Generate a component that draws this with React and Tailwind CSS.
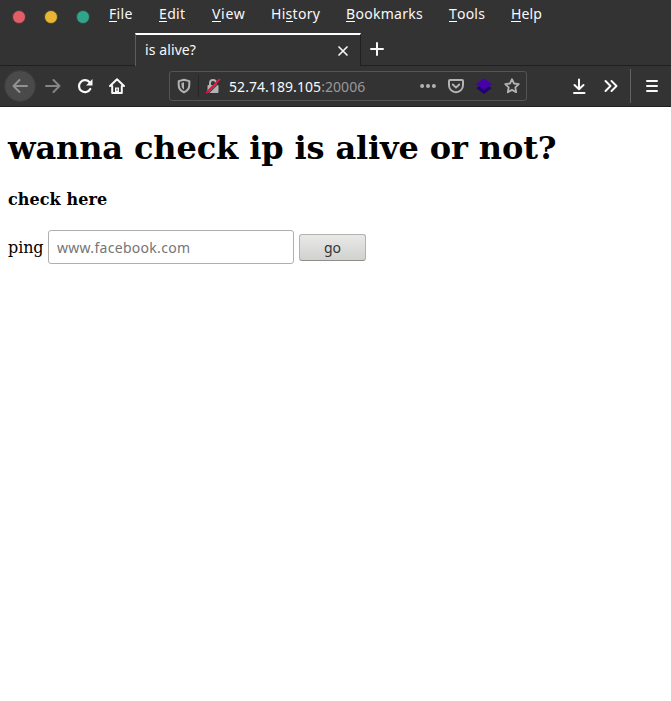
import React from 'react';

const menuItems = [
  { label: 'File', key: 0, box: 'w-[50px]', text: 'tracking-[0.3px]' },
  { label: 'Edit', key: 0, box: 'w-[53px]', text: 'tracking-[0.35px]' },
  { label: 'View', key: 0, box: 'w-[59px]', text: 'tracking-[0.7px]' },
  { label: 'History', key: 2, box: 'w-[75px]', text: 'tracking-[0.3px]' },
  { label: 'Bookmarks', key: 0, box: 'w-[103px]', text: 'tracking-[0.3px]' },
  { label: 'Tools', key: 0, box: 'w-[62px]', text: 'tracking-[0.2px]' },
  { label: 'Help', key: 0, box: 'w-[40px]', text: 'tracking-[0.1px]' },
];

function Icon({ children, className = '' }) {
  return (
    <svg viewBox="0 0 16 16" className={`block size-4 shrink-0 ${className}`} fill="none" stroke="currentColor" strokeWidth="2" strokeLinecap="round" strokeLinejoin="round">
      {children}
    </svg>
  );
}

function MenuBar() {
  return (
    <div className="flex h-[33px] pl-[12px]">
      <div className="flex h-[34px] w-[97px] shrink-0 items-center gap-[18px]">
        <span className="size-[14px] shrink-0 rounded-full border border-[#48383a] bg-[#e35d66]" />
        <span className="size-[14px] shrink-0 rounded-full border border-[#484233] bg-[#e9b633]" />
        <span className="size-[14px] shrink-0 rounded-full border border-[#33433f] bg-[#2fa58c]" />
      </div>
      {menuItems.map(({ label, key, box, text }) => (
        <div key={label} className={`shrink-0 pt-[4px] text-[14px] leading-[20px] ${box} ${text}`}>
          {label.slice(0, key)}
          <span className="inline-block h-[18px] border-b border-white leading-[20px]">{label[key]}</span>
          {label.slice(key + 1)}
        </div>
      ))}
    </div>
  );
}

function TabStrip() {
  return (
    <div className="flex h-[33px]">
      <div className="w-[135px] border-b border-[#202020]" />
      <div className="flex w-[226px] items-center border-l border-l-[#5d5d5d] border-r border-r-[#202020] border-t-2 border-t-white pl-[9px] pr-[11px]">
        <span className="grow pb-[2px] text-[14px] leading-[20px] tracking-[0.1px]">is alive?</span>
        <svg viewBox="0 0 12 12" className="size-3" stroke="#f4f4f4" strokeWidth="1.7" strokeLinecap="round">
          <path d="M2 2l8 8M10 2l-8 8" />
        </svg>
      </div>
      <div className="grow border-b border-[#202020] pl-[8px] pt-[8px]">
        <Icon><path d="M8 2v12M2 8h12" /></Icon>
      </div>
    </div>
  );
}

function AddressBar() {
  return (
    <div className="flex h-[30px] w-[358px] shrink-0 items-center rounded-[3px] border border-[#545454] pl-[6px]">
      <Icon className="text-[#b3b3b3]">
        <path d="M8 1.8L2.7 3.1V7c0 3.3 1.8 5.8 5.3 7.2 3.500-1.4 5.300-3.9 5.300-7.2V3.100L8 1.8z" />
        <path d="M8 4.3v7.4c-1.7-1-2.500-2.6-2.500-4.7V5L8 4.3z" fill="currentColor" stroke="none" />
      </Icon>
      <span className="ml-[6px] h-[22px] w-px bg-[#272727]" />
      <Icon className="ml-[6px] text-[#b3b3b3]">
        <path d="M5 8V5a3 3 0 0 1 6 0v3" strokeLinecap="butt" />
        <rect x="2.5" y="7" width="11" height="8" rx="1" fill="currentColor" stroke="none" />
        <path d="M2.800 15.800L15.8 2.800" stroke="#333333" strokeWidth="1.2" strokeLinecap="butt" />
        <path d="M1.8 14.5L14.5 1.5" stroke="#f20b3d" strokeWidth="2" />
      </Icon>
      <span className="ml-[8px] w-[191px] whitespace-nowrap pt-[2px] text-[14px] leading-[20px] tracking-[0.06px]">
        52.74.189.105<span className="text-[#999999]">:20006</span>
      </span>
      <div className="flex gap-3 text-[#b3b3b3]">
        <Icon>
          <g fill="currentColor" stroke="none"><circle cx="2.1" cy="8" r="2" /><circle cx="8" cy="8" r="2" /><circle cx="13.9" cy="8" r="2" /></g>
        </Icon>
        <Icon>
          <path d="M2 2h12a1 1 0 0 1 1 1v4.2a7 7 0 0 1-14 0V3a1 1 0 0 1 1-1z" />
          <path d="M4.8 6.5L8 9.6l3.2-3.1" />
        </Icon>
        <Icon>
          <path d="M8 5.5l7.800 4.500L8 16 .2 10z" fill="#20006f" stroke="none" />
          <path d="M8 .2l8 5.8-8 5.900L0 6z" fill="#4601aa" stroke="none" />
        </Icon>
        <Icon>
          <path d="M8 1.2l2 4.3 4.8.6-3.5 3.3.9 4.8L8 11.9l-4.2 2.3.9-4.8L1.2 6.1 6 5.5z" strokeWidth="1.8" />
        </Icon>
      </div>
    </div>
  );
}

function Toolbar() {
  return (
    <div className="flex h-[41px] items-center border-b border-[#202020]">
      <div className="ml-[4px] flex size-8 shrink-0 items-center justify-center rounded-full border border-[#3b3b3b] bg-[#4a4a4a] text-[#929292]">
        <Icon><path d="M15 8H1.5M7.5 2L1.5 8l6 6" /></Icon>
      </div>
      <Icon className="ml-[9px] text-[#858585]"><path d="M1 8h13.5M8.500 2l6 6-6 6" /></Icon>
      <Icon className="ml-[16px]">
        <path d="M13.3 11a6 6 0 1 1-.5-6.500" strokeWidth="2.2" />
        <path d="M15.5 1v6.5H9z" fill="currentColor" stroke="none" />
      </Icon>
      <Icon className="ml-[16px]">
        <path d="M1 8l7-6.800L15 8M3.200 8v7h9.600V8" />
        <path d="M6 15v-5.500h4V15z" fill="currentColor" stroke="none" />
        <path d="M8 11v1.500" stroke="#333333" strokeWidth="1" />
      </Icon>
      <div className="w-[44px] shrink-0" />
      <AddressBar />
      <Icon className="ml-[44px]"><path d="M8 1.500v9.500M3.500 7L8 11.300 12.500 7M3 15h10.500" /></Icon>
      <Icon className="ml-[16px]"><path d="M2.500 3l5 5-5 5M8.500 3l5 5-5 5" /></Icon>
      <span className="ml-[11px] h-[34px] w-px bg-[#626262]" />
      <Icon className="ml-[13px]"><path d="M3 3h10M3 8h10M3 13h10" /></Icon>
    </div>
  );
}

export default function App() {
  return (
    <div className="h-[701px] w-[671px] overflow-hidden bg-white text-black">
      <header className="bg-[#333333] font-['Noto_Sans',sans-serif] text-[#f9f9fa]">
        <MenuBar />
        <TabStrip />
        <Toolbar />
      </header>
      <main className="px-[8px] pt-[22px] font-['DejaVu_Serif',serif]">
        <h1 className="text-[32px] font-bold leading-[38px] tracking-[-0.12px]">wanna check ip is alive or not?</h1>
        <h4 className="mt-[23px] text-[16px] font-bold leading-[19px] tracking-[0.08px]">check here</h4>
        <form className="mt-[21px] flex items-center text-[16px]" onSubmit={(e) => e.preventDefault()}>
          <label htmlFor="host" className="w-[40px] shrink-0 pt-[2px] tracking-[-0.1px]">ping</label>
          <input id="host" placeholder="www.facebook.com" className="h-[34px] w-[246px] rounded-[3px] border border-[#afafaf] px-[8px] font-['Noto_Sans',sans-serif] text-[14px] tracking-[0.3px] placeholder:text-[#757575]" />
          <button className="ml-[5px] mt-px h-[27px] w-[67px] rounded-[3px] border border-[#b2b2b0] border-b-[#8f8f8c] bg-linear-to-b from-[#e9e9e8] to-[#d1d1cf] font-['Noto_Sans',sans-serif] text-[14px] leading-[20px] text-[#2e3436]">go</button>
        </form>
      </main>
    </div>
  );
}
